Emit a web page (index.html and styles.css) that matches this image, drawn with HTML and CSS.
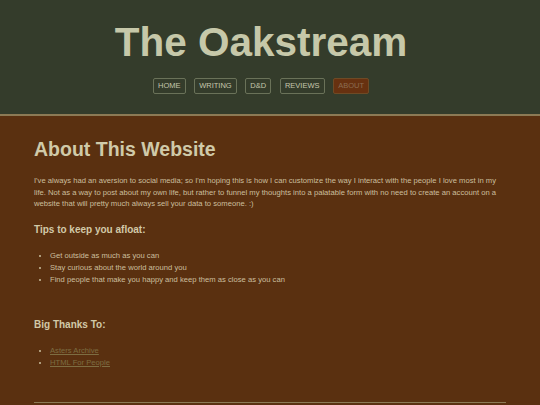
FILE: index.html
```html
<!DOCTYPE html>
<html>
<head>
<meta charset="utf-8">
<link rel="stylesheet" href="styles.css">
</head>
<body>
<header class="site-header">
  <h1 class="site-title">The Oakstream</h1>
  <nav class="nav">
    <a class="nav-btn" href="#">HOME</a>
    <a class="nav-btn" href="#">WRITING</a>
    <a class="nav-btn" href="#">D&amp;D</a>
    <a class="nav-btn" href="#">REVIEWS</a>
    <a class="nav-btn active" href="#">ABOUT</a>
  </nav>
</header>
<main class="content">
  <h2 class="page-title">About This Website</h2>
  <p class="intro">I've always had an aversion to social media; so I'm hoping this is how I can customize the way I interact with the people I love most in my life. Not as a way to post about my own life, but rather to funnel my thoughts into a palatable form with no need to create an account on a website that will pretty much always sell your data to someone. :)</p>
  <h3 class="section-title">Tips to keep you afloat:</h3>
  <ul class="list">
    <li>Get outside as much as you can</li>
    <li>Stay curious about the world around you</li>
    <li>Find people that make you happy and keep them as close as you can</li>
  </ul>
  <h3 class="section-title thanks">Big Thanks To:</h3>
  <ul class="list">
    <li><a class="link" href="#">Asters Archive</a></li>
    <li><a class="link" href="#">HTML For People</a></li>
  </ul>
  <hr class="rule">
</main>
</body>
</html>
```
FILE: styles.css
```css
html, body {
  margin: 0;
  padding: 0;
}
body {
  background: #5a3010;
  font-family: "Liberation Sans", Arial, sans-serif;
  color: #cbbf9e;
}
.site-header {
  background: #343c2b;
  border-bottom: 2px solid #8c7a55;
  height: 116px;
  box-sizing: border-box;
  padding: 19px 18px 0 0;
  display: flex;
  flex-direction: column;
  align-items: center;
}
.site-title {
  margin: 0;
  font-size: 40.5px;
  line-height: 47px;
  font-weight: bold;
  color: #c6c8a9;
}
.nav {
  display: flex;
  gap: 8.5px;
  margin-top: 12px;
}
.nav-btn {
  display: block;
  font-size: 7.5px;
  line-height: 14px;
  padding: 0 4.1px;
  border: 1px solid #6a7259;
  border-radius: 2px;
  color: #c5c7ad;
  text-decoration: none;
}
.nav-btn.active {
  background: #673110;
  border-color: #6e4a25;
  color: #8b6c50;
}
.content {
  padding: 0 34px;
}
.page-title {
  margin: 0;
  padding-top: 20px;
  font-size: 19.5px;
  line-height: 26px;
  font-weight: bold;
  color: #d0caa9;
}
.intro {
  margin: 13px 0 0;
  font-size: 7.65px;
  line-height: 11.5px;
}
.section-title {
  margin: 13px 0 0;
  font-size: 10px;
  line-height: 14px;
  font-weight: bold;
  color: #d2c9a8;
}
.section-title.thanks {
  margin-top: 32px;
}
.list {
  margin: 13px 0 0;
  padding-left: 16px;
  font-size: 7.65px;
  line-height: 12px;
}
.link {
  color: #7d6d42;
  text-decoration: underline;
}
.rule {
  margin: 33px 0 0;
  border: 0;
  border-top: 1px solid #8c7a55;
  height: 0;
}
```
